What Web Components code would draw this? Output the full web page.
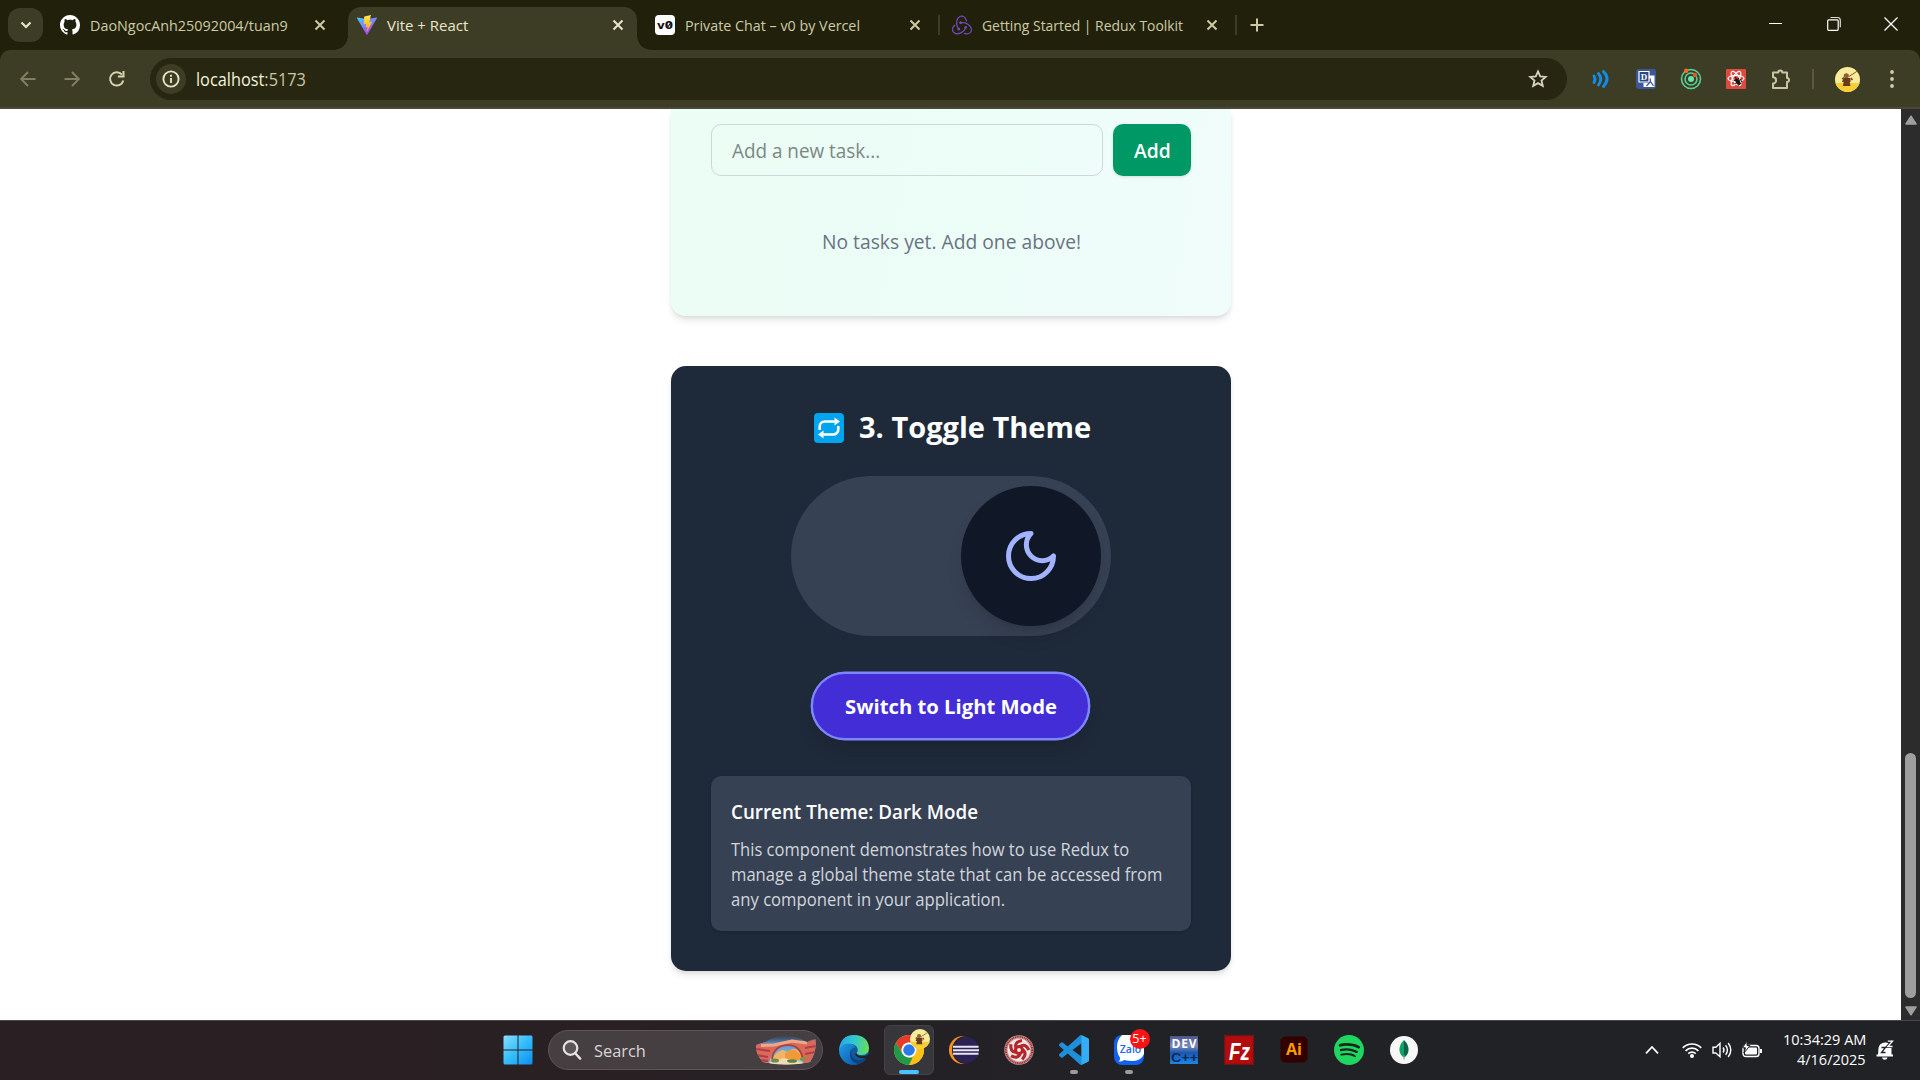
<!DOCTYPE html>
<html lang="en">
<head>
<meta charset="utf-8">
<title>Vite + React</title>
<style>
html,body{margin:0;height:100%;overflow:hidden;background:#fff}
body{font-family:"Open Sans","Noto Sans",sans-serif}
</style>
</head>
<body>
<desktop-shell></desktop-shell>
<script>
const ICONS = {
 github:[16,16,`<path fill="#fff" d="M8 0C3.58 0 0 3.58 0 8c0 3.54 2.29 6.53 5.47 7.59.4.07.55-.17.55-.38 0-.19-.01-.82-.01-1.49-2.01.37-2.53-.49-2.69-.94-.09-.23-.48-.94-.82-1.13-.28-.15-.68-.52-.01-.53.63-.01 1.08.58 1.23.82.72 1.21 1.87.87 2.33.66.07-.52.28-.87.51-1.07-1.78-.2-3.64-.89-3.64-3.95 0-.87.31-1.59.82-2.15-.08-.2-.36-1.02.08-2.12 0 0 .67-.21 2.2.82.64-.18 1.32-.27 2-.27s1.36.09 2 .27c1.53-1.04 2.2-.82 2.2-.82.44 1.1.16 1.92.08 2.12.51.56.82 1.27.82 2.15 0 3.07-1.87 3.75-3.65 3.95.29.25.54.73.54 1.48 0 1.07-.01 1.93-.01 2.2 0 .21.15.46.55.38A8.01 8.01 0 0 0 16 8c0-4.42-3.58-8-8-8z"/>`],
 vite:[20,20,`<defs><linearGradient id="a" x1="0" y1="0" x2=".6" y2="1"><stop stop-color="#41d1ff"/><stop offset="1" stop-color="#bd34fe"/></linearGradient><linearGradient id="b" x1="0" y1="0" x2="0" y2="1"><stop stop-color="#ffea83"/><stop offset=".2" stop-color="#ffdd35"/><stop offset="1" stop-color="#ffa800"/></linearGradient></defs><path fill="url(#a)" d="M19.9 3.2 10.4 19.6a.5.5 0 0 1-.9 0L0 3.2c-.2-.4.1-.8.5-.7l9.500 1.700 9.400-1.700c.4-.1.7.3.5.7z"/><path fill="url(#b)" d="M14.200 0 7.400 1.400a.3.3 0 0 0-.2.2L6.800 9c0 .2.1.3.3.3l1.900-.5c.2 0 .3.1.3.3l-.6 2.800c0 .2.200.4.4.3l1.200-.3c.2-.1.4.1.3.3l-.9 4.200c-.1.3.3.4.4.2l4.700-9.400c.1-.2 0-.4-.3-.4l-2 .4c-.2 0-.3-.100-.3-.300l1.300-4.600c.100-.2-.1-.4-.3-.3z"/>`],
 v0:[20,20,`<rect width="20" height="20" rx="4" fill="#fff"/><text x="10" y="13.600" text-anchor="middle" font-family="DejaVu Sans,sans-serif" font-weight="bold" font-size="10.500" textLength="16" lengthAdjust="spacingAndGlyphs" fill="#111">v0</text><path d="M12.500 12.500 16 7.500" stroke="#111" stroke-width="1.200"/>`],
 redux:[24,24,`<path fill="#764abc" d="M16.634 16.504c.87-.075 1.543-.84 1.5-1.754-.047-.914-.796-1.648-1.709-1.648h-.061a1.71 1.71 0 00-1.648 1.769c.03.479.226.869.494 1.153-1.048 2.038-2.621 3.535-5.005 4.795-1.603.838-3.296 1.154-4.944.929-1.378-.194-2.456-.81-3.116-1.799-.988-1.499-1.078-3.116-.255-4.734.601-1.166 1.499-2.023 2.099-2.443a9.96 9.96 0 01-.42-1.543C-.868 14.408-.416 18.752.932 20.805c1.004 1.498 3.057 2.456 5.304 2.456.599 0 1.23-.044 1.843-.194 3.897-.749 6.848-3.086 8.541-6.532zm5.348-3.746c-2.32-2.728-5.738-4.226-9.634-4.226h-.51c-.253-.554-.837-.899-1.498-.899h-.045c-.943 0-1.678.81-1.647 1.753.03.898.794 1.648 1.708 1.648h.074a1.69 1.69 0 001.499-1.049h.555c2.309 0 4.495.674 6.488 1.992 1.527 1.005 2.622 2.323 3.237 3.896.538 1.288.509 2.547-.045 3.597-.855 1.647-2.294 2.517-4.196 2.517-1.199 0-2.367-.375-2.967-.644-.36.298-.96.793-1.394 1.093 1.318.598 2.652.943 3.94.943 2.922 0 5.093-1.647 5.918-3.236.898-1.798.824-4.824-1.47-7.416zM6.49 17.042c.03.899.793 1.648 1.708 1.648h.06a1.688 1.688 0 001.648-1.768c0-.9-.779-1.647-1.693-1.647h-.06c-.06 0-.149 0-.226.029-1.243-2.098-1.768-4.346-1.572-6.772.12-1.828.72-3.417 1.797-4.735.899-1.124 2.593-1.68 3.746-1.708 3.236-.061 4.585 3.971 4.689 5.574l1.498.45c-.345-4.914-3.4-7.492-6.322-7.492-2.742 0-5.273 1.993-6.293 4.915-1.393 3.896-.479 7.641 1.229 10.638a1.36 1.36 0 00-.209.868z"/>`],
 x:[12,12,`<path d="M1.500 1.500l9 9m0-9-9 9" stroke="currentColor" stroke-width="2" fill="none"/>`],
 chevdown:[12,12,`<path d="M1.500 3.500 6 8l4.500-4.500" stroke="currentColor" stroke-width="2.200" fill="none"/>`],
 plus:[14,14,`<path d="M7 .5v13M.5 7h13" stroke="currentColor" stroke-width="2"/>`],
 winmin:[14,14,`<path d="M0 6.500h13" stroke="#fff" stroke-width="1"/>`],
 winmax:[14,14,`<path d="M3.500.5h7a2.800 2.800 0 0 1 2.800 2.800v7" stroke="#ddd" fill="none" stroke-width="1.200"/><rect x=".7" y="2.800" width="10.500" height="10.500" rx="1" stroke="#fff" fill="none" stroke-width="1.200"/>`],
 winx:[14,14,`<path d="M.5.5l13 13m0-13-13 13" stroke="#fff" stroke-width="1.300"/>`],
 back:[16,16,`<path d="M15.500 8H1.500M8 1 1.200 8 8 15" stroke="#817f62" stroke-width="2" fill="none"/>`],
 fwd:[16,16,`<path d="M.5 8h14M8 1l6.800 7L8 15" stroke="#817f62" stroke-width="2" fill="none"/>`],
 reload:[18,18,`<path d="M15.300 10.500a6.700 6.700 0 1 1-1.400-6" stroke="#d8d5ae" stroke-width="2" fill="none"/><path d="M15.500.9v5.600H9.900" stroke="#d8d5ae" stroke-width="2" fill="none"/>`],
 info:[18,18,`<circle cx="9" cy="9" r="7.600" fill="none" stroke="#e7e4c4" stroke-width="1.900"/><path d="M9 8v5M9 4.800v2" stroke="#e7e4c4" stroke-width="1.900"/>`],
 star:[20,20,`<path d="M10 2.400l2.200 5 5.500.5-4.200 3.600 1.300 5.400L10 14.100l-4.800 2.800 1.300-5.400-4.200-3.600 5.500-.5z" fill="none" stroke="#d6d4c0" stroke-width="1.800"/>`],
 waves:[18,18,`<g fill="none" stroke="#108ee9" stroke-width="2.900" stroke-linecap="round"><path d="M2 6q2 3 0 6.500"/><path d="M6.500 3.500q4.500 5.500 0 11.500"/><path d="M11.500 1.500q7 7.500 0 15"/></g>`],
 trans:[20,20,`<rect width="20" height="20" rx="3" fill="#3c5797"/><path d="M13 6.500h5.500v11.500H7.500V14H13z" fill="#fff"/><path d="M3 2.500h10V13H3z" fill="#2d4888" stroke="#fff" stroke-width="1.200"/><text x="8" y="11" font-size="9" font-family="Liberation Serif,serif" font-weight="bold" fill="#fff" text-anchor="middle">D</text><path d="M10.500 17l4-4.500 3 4.500M14.300 9.500v3.200" fill="none" stroke="#3c5797" stroke-width="1.300"/>`],
 orbit:[22,22,`<g fill="none" stroke="#58cf96" stroke-width="1.600"><circle cx="11" cy="11" r="9.500"/><circle cx="11" cy="11" r="6"/></g><circle cx="11" cy="11" r="3" fill="#5eeaa8"/><circle cx="6.200" cy="2.800" r="2.200" fill="#f06a2a"/><circle cx="15" cy="7" r="2.200" fill="#f0502a"/>`],
 bug:[20,20,`<rect width="20" height="20" rx="1" fill="#e0493e"/><g fill="none" stroke="#fff" stroke-width="1.200"><ellipse cx="10" cy="9.500" rx="8" ry="3.200"/><ellipse cx="10" cy="9.500" rx="8" ry="3.200" transform="rotate(60 10 9.500)"/><ellipse cx="10" cy="9.500" rx="8" ry="3.200" transform="rotate(120 10 9.500)"/></g><path d="M9 8l4 6M7.500 12l4-2M9 15l4-2.500M11.500 17l3.500-3M12 8.500l1.500 3.500M14.500 10l1 3" stroke="#1a1414" stroke-width="1"/><ellipse cx="11.800" cy="12.800" rx="1.900" ry="3.600" transform="rotate(-35 11.800 12.800)" fill="#1a1414"/>`],
 puzzle:[22,22,`<path d="M3 4.500h5.300a2 2 0 0 1 4 0H17v5.500a2 2 0 0 1 0 4V20H3v-4.500a3.100 3.100 0 0 0 0-6.200z" fill="none" stroke="#c9c6a2" stroke-width="2" stroke-linejoin="round"/>`],
 avatar:[25,25,`<defs><clipPath id="c"><circle cx="12.500" cy="12.500" r="12.500"/></clipPath></defs><g clip-path="url(#c)"><rect width="25" height="25" fill="#f8ec9a"/><rect y="16" width="25" height="9" fill="#f7ce35"/></g><path d="M14 9.500 22.500 4" stroke="#8a5a28" stroke-width="1"/><circle cx="11.300" cy="8.800" r="2.600" fill="#8d6137"/><path d="M8.500 11h7v4h-.8l.8 4H7.800l.9-4H7z" fill="#6b3a18"/><path d="M7 12l2-1.500M16 11l1.500 2" stroke="#7a4a20" stroke-width="1.500"/>`],
 kebab:[6,20,`<g fill="#d0cda8"><circle cx="3" cy="3" r="1.900"/><circle cx="3" cy="10" r="1.900"/><circle cx="3" cy="17" r="1.900"/></g>`],
 repeat:[30,30,`<rect width="30" height="30" rx="4" fill="#00a4ef"/><path d="M5.700 17v-3.500a5 5 0 0 1 5-5H21" fill="none" stroke="#fff" stroke-width="2.600"/><path d="M20.500 4.500l5.500 4-5.500 4z" fill="#fff"/><path d="M24.300 13v3.500a5 5 0 0 1-5 5H9" fill="none" stroke="#fff" stroke-width="2.600"/><path d="M9.500 25.500l-5.500-4 5.500-4z" fill="#fff"/>`],
 moon:[24,24,`<path d="M12 3a6 6 0 0 0 9 9 9 9 0 1 1-9-9Z" fill="none" stroke="#a3b3ff" stroke-width="2" stroke-linecap="round" stroke-linejoin="round"/>`],
 start:[30,30,`<defs><linearGradient id="w" x1="0" y1="0" x2="1" y2="1"><stop stop-color="#86e0ff"/><stop offset=".5" stop-color="#33bdfb"/><stop offset="1" stop-color="#0c8df2"/></linearGradient></defs><path fill="url(#w)" d="M2 .5h12.500v14H.5V2A1.500 1.500 0 0 1 2 .5zM15.500.5H28A1.500 1.500 0 0 1 29.500 2v12.500h-14zM.5 15.500h14v14H2A1.500 1.500 0 0 1 .5 28zM15.500 15.500h14V28a1.500 1.500 0 0 1-1.500 1.500H15.500z"/>`],
 mag:[20,20,`<circle cx="8.500" cy="8" r="6.800" fill="#5b5558" stroke="#e6e3e4" stroke-width="2.200"/><path d="M13.200 13.200 18.200 18.600" stroke="#e6e3e4" stroke-width="2.400" stroke-linecap="round"/>`],
 arch:[60,30,`<defs><clipPath id="h"><path d="M0 10Q4 8 9 7Q30-6 51 7Q55 4 59.500 4Q61 16 54 27Q30 32 7 27Q-1 18 0 10z"/></clipPath><linearGradient id="s" x1="0" y1="0" x2="0" y2="1"><stop stop-color="#2f4a68" stop-opacity=".2"/><stop offset=".28" stop-color="#5a93c4"/><stop offset="1" stop-color="#a9d4f5"/></linearGradient></defs><g clip-path="url(#h)"><rect width="60" height="30" fill="url(#s)"/><path d="M16 24q4-6 8-8 4-3 7 2 5-6 10-3 5 2 8 6v4H15z" fill="#f3b565"/><path d="M29 19l4-4h6l7 6v4H29z" fill="#f0993a"/><path d="M0 10 8 8l10 1 18-4.500 6 1.500 9 1 9-3v26H47Q46 10.500 31 10.500 17 11 13 28H0z" fill="#d96a5a"/><path d="M5 10.500 18 10 36 6 51 8" stroke="#f0a688" stroke-width="3" fill="none"/><path d="M16 24Q18 11 31 10.200T47 24" stroke="#a8403f" stroke-width="1.800" fill="none"/><path d="M0 14l14 2M0 20l12 2M49 13l11-2M49 19l10-2M2 25l10 1" stroke="#b03e42" stroke-width="2.200"/><path d="M12 28l16-5 20 5v3H12z" fill="#f1d9b2"/><ellipse cx="19" cy="25.500" rx="4" ry="2" fill="#6d8c4a"/><ellipse cx="36" cy="26" rx="5" ry="1.800" fill="#5d8140"/><ellipse cx="47" cy="24" rx="3" ry="2" fill="#799650"/></g>`],
 edge:[30,30,`<defs><linearGradient id="e1" x1="0" y1=".2" x2="1" y2=".3"><stop stop-color="#2ba6e4"/><stop offset=".5" stop-color="#2fc6d0"/><stop offset="1" stop-color="#66df5a"/></linearGradient><linearGradient id="e2" x1="0" y1="0" x2="1" y2="1"><stop stop-color="#1e9de6"/><stop offset="1" stop-color="#0c55a5"/></linearGradient></defs><circle cx="15" cy="15" r="15" fill="#12569d"/><path d="M0 16Q1 0 15 0q14 .5 15 13 0 6.500-7 7-5 0-5.500-2 2-2 1-4.500Q17 9 11 9 3.500 9 0 16z" fill="url(#e1)"/><path d="M0 15Q3 8 10 8.500q6 .5 6 4-4 .5-4.500 5Q11 25 20 29.100 9 32 3 24q-3-4-3-9z" fill="url(#e2)"/><path d="M12 14q-1.500 9 6 11 5.500 1 10-3-3 5.500-8.500 7Q8 26 12 14z" fill="#0b4180"/><path d="M17.500 18q.5 3.800 8 3 2-.3 3.300-1.500l1.200 1.500-3 3-2.500-.8Q18 23 16 19.500z" fill="#202226"/>`],
 chrome:[48,48,`<circle cx="24" cy="24" r="24" fill="#fbc116"/><path d="M24 12h20.800A24 24 0 0 1 24 48l10.400-18z" fill="#fbc116"/><path d="M3.200 12 13.600 30 24 36h5.800L24 48A24 24 0 0 1 3.200 12z" fill="#21994a"/><path d="M24 12h20.800A24 24 0 0 0 3.200 12l10.400 18A12 12 0 0 1 24 12z" fill="#e33b2e"/><circle cx="24" cy="24" r="12" fill="#fff"/><circle cx="24" cy="24" r="9.300" fill="#2a7be9"/>`],
 eclipse:[30,30,`<circle cx="14" cy="15" r="14" fill="#f7941e"/><circle cx="17" cy="15" r="14" fill="#202226"/><circle cx="17" cy="15" r="13" fill="#2c2255"/><path d="M4 11.700h25.500M4 15.200h26M4 18.700h25.500" stroke="#e9e6f4" stroke-width="2"/>`],
 garuda:[30,30,`<circle cx="15" cy="15" r="14.700" fill="#c9a3a3"/><circle cx="15" cy="15" r="13.200" fill="none" stroke="#a82c2e" stroke-width="2" stroke-dasharray="1.200 .6"/><circle cx="15" cy="15" r="11.300" fill="#f1e6e4"/><g fill="none" stroke="#b3262a" stroke-width="3.100"><circle cx="15" cy="15" r="3.500"/><path d="M12 13q-2-6 6-7.500"/><path d="M12 13q-2-6 6-7.500" transform="rotate(72 15 15)"/><path d="M12 13q-2-6 6-7.500" transform="rotate(144 15 15)"/><path d="M12 13q-2-6 6-7.500" transform="rotate(216 15 15)"/><path d="M12 13q-2-6 6-7.500" transform="rotate(288 15 15)"/></g>`],
 vscode:[24,24,`<path fill="#1f8fdc" d="M23.150 2.587 18.210.21a1.494 1.494 0 0 0-1.705.29l-9.460 8.630-4.120-3.128a.999.999 0 0 0-1.276.057L.327 7.261A1 1 0 0 0 .326 8.740L3.899 12 .326 15.260a1 1 0 0 0 .001 1.479L1.650 17.940a.999.999 0 0 0 1.276.057l4.120-3.128 9.460 8.630a1.492 1.492 0 0 0 1.704.29l4.942-2.377A1.500 1.500 0 0 0 24 20.060V3.939a1.500 1.500 0 0 0-.85-1.352zm-5.146 14.861L10.826 12l7.178-5.448v10.896z"/><path d="M18 .2 23.200 2.600a1.500 1.500 0 0 1 .8 1.400v16a1.500 1.500 0 0 1-.8 1.400L18 23.800z" fill="#35adf4"/>`],
 zalo:[30,30,`<rect width="30" height="30" rx="8" fill="#0f62f0"/><path d="M8 0h14q8 0 8 8v11q-3 7-11 7-5 0-9-1-2 2-5.500 1.500 2-2 1.500-4Q3 19 3 12 3 5 8 0z" fill="#fff"/><text x="16.500" y="17.500" text-anchor="middle" font-family="Open Sans,sans-serif" font-weight="600" font-size="10.500" fill="#1c68ee">Zalo</text>`],
 dev:[30,30,`<defs><linearGradient id="d" x1="0" y1="0" x2="0" y2="1"><stop stop-color="#49568e"/><stop offset=".35" stop-color="#7e89b8"/><stop offset=".6" stop-color="#1a56b0"/><stop offset="1" stop-color="#1c86e6"/></linearGradient></defs><rect x="1" y="1" width="28" height="28" fill="url(#d)"/><text x="15" y="13" text-anchor="middle" font-family="Open Sans,sans-serif" font-weight="700" font-size="12" textLength="25" fill="#fff">DEV</text><text x="2" y="27" font-family="Liberation Sans,sans-serif" font-weight="700" font-size="13" textLength="27" lengthAdjust="spacingAndGlyphs" fill="#0a2a58">C++</text>`],
 fz:[30,30,`<rect x=".7" y=".7" width="28.600" height="28.600" fill="#b30c0e" stroke="#8f0a0c" stroke-width="1.400" stroke-dasharray="2 1"/><text x="5" y="25" font-family="Liberation Sans,sans-serif" font-weight="700" font-style="italic" font-size="23" textLength="21" lengthAdjust="spacingAndGlyphs" fill="#fff">Fz</text>`],
 ai:[30,30,`<rect x="1.500" y="1.500" width="27" height="26" rx="5" fill="#330000"/><text x="15" y="19.500" text-anchor="middle" font-family="Open Sans,sans-serif" font-weight="700" font-size="16" fill="#ff9a00">Ai</text>`],
 spotify:[24,24,`<path fill="#1ed760" d="M12 0C5.400 0 0 5.400 0 12s5.400 12 12 12 12-5.400 12-12S18.660 0 12 0z"/><path fill="#17251b" d="M17.521 17.340c-.240.359-.660.480-1.021.240-2.820-1.740-6.360-2.101-10.561-1.141-.418.122-.779-.179-.899-.539-.120-.421.180-.780.540-.900 4.560-1.021 8.520-.600 11.640 1.320.420.180.479.659.301 1.020zm1.440-3.300c-.301.420-.841.600-1.262.300-3.239-1.980-8.159-2.580-11.939-1.380-.479.120-1.020-.120-1.140-.600-.120-.480.120-1.021.600-1.141C9.600 9.900 15 10.561 18.720 12.840c.361.181.540.780.241 1.200zm.120-3.360C15.240 8.400 8.820 8.160 5.160 9.301c-.600.179-1.200-.181-1.380-.721-.180-.601.180-1.200.720-1.381 4.260-1.260 11.280-1.020 15.721 1.621.539.300.719 1.020.419 1.560-.299.421-1.020.599-1.559.300z"/>`],
 mongo:[30,30,`<circle cx="15" cy="15" r="14" fill="#f7f7f7"/><path d="M15 5q-5 5-4.500 10.500Q11 20 15 22.500z" fill="#10a068"/><path d="M15 5q5 5 4.500 10.500Q19 20 15 22.500z" fill="#0a6446"/><path d="M15 20v4.500" stroke="#8aa596" stroke-width="1"/>`],
 chevup:[14,10,`<path d="M1 8.300 7 2l6 6.300" fill="none" stroke="#fff" stroke-width="1.700"/>`],
 wifi:[20,16,`<g fill="none" stroke="#fff" stroke-width="1.700"><path d="M.8 5.800a13 13 0 0 1 18.400 0"/><path d="M3.600 8.800a9 9 0 0 1 12.800 0"/><path d="M6.300 11.600a5.300 5.300 0 0 1 7.400 0"/></g><circle cx="10" cy="14" r="2" fill="#fff"/>`],
 sound:[20,18,`<g fill="none" stroke="#fff" stroke-width="1.400"><path d="M1 6.300h2.800L8 2.300v13.400L3.800 12H1z"/><path d="M11 6.500q2 2.500 0 5M13.600 4.200q3.700 4.800 0 9.600M16.200 2q5.200 7 0 14"/></g>`],
 battery:[20,18,`<rect x="1" y="4.500" width="16" height="11" rx="2.800" fill="none" stroke="#fff" stroke-width="1.400"/><rect x="3" y="6.500" width="12" height="7" rx="1" fill="#fff"/><path d="M18 8h2v4h-2z" fill="#fff"/><path d="M5 0 .5 6.800h3L2 12l6-7.500H5z" fill="#fff" stroke="#202226" stroke-width="1"/>`],
 bell:[18,20,`<path d="M2 15.500h13.500V8A6 6 0 0 0 9 2.500 6.500 6.500 0 0 0 2.500 8z" fill="#fff"/><path d="M.5 14.500h16.500v2H.5z" fill="#fff"/><path d="M6 17.500h5.500a2.800 2.800 0 0 1-5.500 0z" fill="#fff"/><path d="M5.500 7.500h4l-4 5h4" fill="none" stroke="#202226" stroke-width="1.300"/><path d="M11.800 1.200h4.700l-4.700 5.300h4.700" fill="none" stroke="#202226" stroke-width="3.200"/><path d="M11.800 1.200h4.700l-4.700 5.300h4.700" fill="none" stroke="#fff" stroke-width="1.300"/>`]
};

/* Base class: each element renders its own shadow tree once. */
class Base extends HTMLElement {
  connectedCallback(){
    if(this.shadowRoot) return;
    this.attachShadow({mode:'open'}).innerHTML = this.view();
    this.ready && this.ready();
  }
  a(n,d=''){ return this.getAttribute(n) ?? d; }
}

class UiIcon extends Base {
  view(){
    const [w,h,m]=ICONS[this.a('name')];
    const W=this.a('w',w), H=this.a('h',h);
    return `<style>:host{display:block;flex:none;width:${W}px;height:${H}px}svg{display:block;width:100%;height:100%;overflow:visible}</style><svg viewBox="0 0 ${w} ${h}">${m}</svg>`;
  }
}

/* A single line of text condensed or widened to a set advance width. */
class FitText extends Base {
  view(){ return `<style>:host{display:block;flex:none;width:${this.a('w')}px;white-space:nowrap}span{display:inline-block;transform-origin:0 50%}</style><span><slot></slot></span>`; }
  ready(){
    const s=this.shadowRoot.querySelector('span');
    s.style.transform=`scaleX(${this.a('w')/s.offsetWidth})`;
  }
}

class BrowserTab extends Base {
  view(){
    return `<style>
    :host{display:flex;align-items:center;box-sizing:border-box;height:36px;width:290px;padding:0 13px 0 9px;color:#cdcba6;font-size:14.8px;line-height:20px}
    :host([active]){position:relative;height:43px;margin-top:7px;padding-bottom:7px;background:#3d3c24;border-radius:13px 13px 0 0;color:#e9e7cb}
    :host([active])::before,:host([active])::after{content:"";position:absolute;bottom:0;width:14px;height:14px}
    :host([active])::before{right:100%;background:radial-gradient(circle at 0 0,transparent 13.500px,#3d3c24 14px)}
    :host([active])::after{left:100%;background:radial-gradient(circle at 100% 0,transparent 13.500px,#3d3c24 14px)}
    fit-text{margin-left:10px;padding-bottom:1px} .x{margin-left:auto}
    </style><ui-icon name="${this.a('icon')}" w="20" h="20"></ui-icon><fit-text w="${this.a('tw')}">${this.a('label')}</fit-text><ui-icon class="x" name="x"></ui-icon>`;
  }
}

class TabStrip extends Base {
  view(){
    return `<style>
    :host{display:flex;height:50px;background:#21200b;color:#cdcba6}
    .drop{width:35px;height:34px;margin:8px 0 0 8px;border-radius:12px;background:#3d3c24;display:grid;place-items:center;color:#e6e4c8}
    browser-tab:not([active]){margin-top:7px}
    .t1{width:288px;margin-left:8px;margin-right:9px}.t2{width:289px}.t3{width:288px;margin-left:9px}.t4{width:288px;margin-left:3px}
    .sep{width:2px;height:20px;margin:15px 0 0 4px;background:#3d3c24;flex:none}
    .plus{margin:18px 0 0 13px}
    .win{margin-left:auto;display:flex;gap:43px;padding:17px 22px 0 0}
    </style><div class="drop"><ui-icon name="chevdown"></ui-icon></div>
    <browser-tab class="t1" icon="github" label="DaoNgocAnh25092004/tuan9" tw="198"></browser-tab>
    <browser-tab class="t2" active icon="vite" label="Vite + React" tw="81"></browser-tab>
    <browser-tab class="t3" icon="v0" label="Private Chat – v0 by Vercel" tw="175"></browser-tab>
    <div class="sep"></div>
    <browser-tab class="t4" icon="redux" label="Getting Started | Redux Toolkit" tw="201"></browser-tab>
    <div class="sep"></div>
    <ui-icon class="plus" name="plus"></ui-icon>
    <div class="win"><ui-icon name="winmin" style="margin-right:1px"></ui-icon><ui-icon name="winmax"></ui-icon><ui-icon name="winx"></ui-icon></div>`;
  }
}

class ToolBar extends Base {
  view(){
    return `<style>
    :host{display:block;height:59px;background:#21200b}
    .bar{display:flex;align-items:center;box-sizing:border-box;height:59px;background:#3d3c24;border-radius:10px 10px 0 0;border-bottom:2px solid #4a483b;padding:1px 24px 0 20px}
    .nav{display:flex;gap:28px;align-items:center;width:130px}
    .omni{display:flex;align-items:center;box-sizing:border-box;width:1417px;height:42px;border-radius:21px;background:#272611;padding:0 19px 0 6px;font-size:17.500px;color:#f3f1da;flex:none}
    .i{width:30px;height:30px;border-radius:50%;background:#3d3c24;display:grid;place-items:center;margin-right:10px}
    .port{color:#c9c7a5}.star{margin-left:auto}
    .ext{display:flex;align-items:center;margin-left:11px;flex:none}
    .ext>div{width:45px;display:grid;place-items:center}
    .s{width:2px;height:20px;background:#5b593d;margin:0 21px 0 9px}
    </style><div class="bar">
    <div class="nav"><ui-icon name="back"></ui-icon><ui-icon name="fwd"></ui-icon><ui-icon name="reload"></ui-icon></div>
    <div class="omni"><div class="i"><ui-icon name="info"></ui-icon></div><fit-text w="110">localhost<span class="port">:5173</span></fit-text><ui-icon class="star" name="star"></ui-icon></div>
    <div class="ext"><div><ui-icon name="waves"></ui-icon></div><div><ui-icon name="trans"></ui-icon></div><div><ui-icon name="orbit"></ui-icon></div><div><ui-icon name="bug"></ui-icon></div><div><ui-icon name="puzzle"></ui-icon></div></div>
    <div class="s"></div><ui-icon name="avatar"></ui-icon><ui-icon name="kebab" style="margin-left:29px"></ui-icon></div>`;
  }
}

class TaskCard extends Base {
  view(){
    return `<style>
    :host{display:block;box-sizing:border-box;width:560px;height:207px;flex:none;padding:15px 40px 0;border-radius:0 0 15px 15px;background:linear-gradient(100deg,#ebfdf5 10%,#edfdf8 60%,#f0fdfb);box-shadow:0 5px 7.500px -1.250px rgba(0,0,0,.1),0 2.500px 5px -2.500px rgba(0,0,0,.1);font-size:19.800px}
    .row{display:flex;gap:10px}
    .in{box-sizing:border-box;width:392px;height:52px;border:1px solid #d1d5dc;border-radius:10px;padding:0 19.500px;display:flex;align-items:center;color:#7b8782}
    .btn{width:78px;height:52px;border-radius:10px;background:#096;color:#fff;font-weight:600;display:grid;place-items:center;box-shadow:0 1px 3px rgba(0,0,0,.12)}
    .empty{display:flex;justify-content:center;margin-top:51px;line-height:30px;color:#6a7282}
    </style><div class="row"><div class="in"><fit-text w="148">Add a new task...</fit-text></div><div class="btn"><fit-text w="37">Add</fit-text></div></div>
    <div class="empty"><fit-text w="259">No tasks yet. Add one above!</fit-text></div>`;
  }
}

class ThemeCard extends Base {
  view(){
    return `<style>
    :host{display:flex;flex-direction:column;align-items:center;box-sizing:border-box;width:560px;height:605px;flex:none;margin-top:50px;padding:40px;border-radius:15px;background:#1e2939;color:#fff;box-shadow:0 5px 7.500px -1.250px rgba(0,0,0,.1),0 2.500px 5px -2.500px rgba(0,0,0,.1)}
    h2{display:flex;align-items:center;gap:14.500px;margin:0 0 30px;padding-left:3px;height:40px;font-size:29.400px;line-height:38px;font-weight:700}
    h2 ui-icon{margin-top:3px}h2 fit-text{padding-top:2px}
    .track{display:flex;justify-content:flex-end;box-sizing:border-box;width:320px;height:160px;padding:10px;border-radius:80px;background:#364153}
    .knob{width:140px;height:140px;border-radius:50%;background:#101828;display:grid;place-items:center;box-shadow:0 12px 19px -4px rgba(0,0,0,.12),0 5px 7px -5px rgba(0,0,0,.12)}
    .btn{display:grid;place-items:center;box-sizing:border-box;width:279px;height:68px;margin:36px 1px 36px 0;border:2.500px solid #7c86ff;border-radius:34px;background:#432dd7;font-size:19.800px;font-weight:700;box-shadow:0 0 0 .4px #7c86ff,0 12px 19px -4px rgba(0,0,0,.12)}
    .info{box-sizing:border-box;width:480px;height:155px;padding:21px 20px 0 19.500px;border-radius:10px;background:#364153;box-shadow:0 1px 3px rgba(0,0,0,.15)}
    h3{margin:0 0 10px;font-size:19.800px;line-height:30px;font-weight:600}
    .d{font-size:17.500px;line-height:25px;color:#d1d5dc}
    </style><h2><ui-icon name="repeat"></ui-icon><fit-text w="232">3. Toggle Theme</fit-text></h2>
    <div class="track"><div class="knob"><ui-icon name="moon" w="60" h="60"></ui-icon></div></div>
    <div class="btn"><fit-text w="212">Switch to Light Mode</fit-text></div>
    <div class="info"><h3><fit-text w="247">Current Theme: Dark Mode</fit-text></h3>
    <div class="d"><fit-text w="398">This component demonstrates how to use Redux to</fit-text><fit-text w="431">manage a global theme state that can be accessed from</fit-text><fit-text w="274">any component in your application.</fit-text></div></div>`;
  }
}

class ScrollRail extends Base {
  view(){
    return `<style>:host{display:flex;flex-direction:column;align-items:center;box-sizing:border-box;width:19px;height:911px;background:#2c2c2c;padding:6px 0 4px}
    svg{display:block;width:12px;height:10px}.thumb{width:11px;height:245px;border-radius:6px;background:#9f9f9f;margin:auto 0 8px}</style>
    <svg viewBox="0 0 12 10"><path d="M6 1.200 11 9H1z" fill="#9f9f9f" stroke="#9f9f9f" stroke-width="1.500" stroke-linejoin="round"/></svg><div class="thumb"></div>
    <svg viewBox="0 0 12 10"><path d="M6 8.800 11 1H1z" fill="#9f9f9f" stroke="#9f9f9f" stroke-width="1.500" stroke-linejoin="round"/></svg>`;
  }
}

class TaskApp extends Base {
  view(){
    return `<style>:host{position:relative;display:grid;place-items:center;width:55px;height:50px;flex:none}
    :host([active])::before{content:"";position:absolute;inset:0 2.500px;border-radius:6px;background:#37363a;border:1px solid #434247;box-sizing:border-box}
    ui-icon{position:relative}
    .bar{position:absolute;bottom:1px;left:50%;width:8px;height:4px;border-radius:2px;background:#9b9b9d;transform:translateX(-50%)}
    :host([active]) .bar{width:20px;background:#4cc2ff}
    .badge{position:absolute;left:28px;top:4px;width:20px;height:20px;border-radius:50%;background:#f81414;color:#fff;font-size:12.500px;line-height:20px;text-align:center}
    .pic{position:absolute;left:28px;top:4px}</style>
    <ui-icon name="${this.a('icon')}" w="30" h="30"></ui-icon>${this.hasAttribute('open')?'<div class="bar"></div>':''}
    ${this.a('badge')?`<div class="badge">${this.a('badge')}</div>`:''}${this.hasAttribute('active')?'<ui-icon class="pic" style="position:absolute" name="avatar" w="20" h="20"></ui-icon>':''}`;
  }
}

class TaskBar extends Base {
  view(){
    return `<style>
    :host{display:flex;box-sizing:border-box;height:60px;border-top:1px solid #47484a;padding:4px 26px 0 490px;background:linear-gradient(90deg,#2a2023 0,#292023 30%,#242125 48%,#202226 62%,#202225);color:#fff}
    .search{display:flex;align-items:center;box-sizing:border-box;width:275px;height:40px;margin:5px 3.500px 0 3px;border:1px solid #5b5557;border-radius:20px;background:#453f42;padding:0 6px 0 13px;color:#d8d5d6;font-size:17px}
    .search fit-text{margin-left:12px}.search .pic{margin-left:auto}
    .tray{margin-left:auto;display:flex;align-items:center;height:50px}
    .clock{display:flex;flex-direction:column;align-items:flex-end;font-size:14.700px;line-height:20px;margin:0 10px 0 21px;padding-bottom:3px}
    </style><task-app icon="start"></task-app>
    <div class="search"><ui-icon name="mag"></ui-icon><fit-text w="52">Search</fit-text><ui-icon class="pic" name="arch"></ui-icon></div>
    <task-app icon="edge"></task-app><task-app icon="chrome" open active></task-app><task-app icon="eclipse"></task-app><task-app icon="garuda"></task-app><task-app icon="vscode" open></task-app><task-app icon="zalo" open badge="5+"></task-app><task-app icon="dev"></task-app><task-app icon="fz"></task-app><task-app icon="ai"></task-app><task-app icon="spotify"></task-app><task-app icon="mongo"></task-app>
    <div class="tray"><ui-icon name="chevup" style="margin-right:23px"></ui-icon><ui-icon name="wifi" style="margin-right:10px"></ui-icon><ui-icon name="sound" style="margin-right:10px"></ui-icon><ui-icon name="battery"></ui-icon>
    <div class="clock"><fit-text w="83">10:34:29 AM</fit-text><fit-text w="69">4/16/2025</fit-text></div><ui-icon name="bell"></ui-icon></div>`;
  }
}

class DesktopShell extends Base {
  view(){
    return `<style>:host{display:flex;flex-direction:column;width:1920px;height:1080px;overflow:hidden;background:#fff}
    .view{display:flex;height:911px}main{flex:1;display:flex;flex-direction:column;align-items:center;background:#fff;overflow:hidden;padding-left:1px;box-sizing:border-box}</style>
    <tab-strip></tab-strip><tool-bar></tool-bar><div class="view"><main><task-card></task-card><theme-card></theme-card></main><scroll-rail></scroll-rail></div><task-bar></task-bar>`;
  }
}

for (const [n,c] of Object.entries({'ui-icon':UiIcon,'fit-text':FitText,'browser-tab':BrowserTab,'tab-strip':TabStrip,'tool-bar':ToolBar,'task-card':TaskCard,'theme-card':ThemeCard,'scroll-rail':ScrollRail,'task-app':TaskApp,'task-bar':TaskBar,'desktop-shell':DesktopShell})) customElements.define(n,c);
</script>
</body>
</html>
